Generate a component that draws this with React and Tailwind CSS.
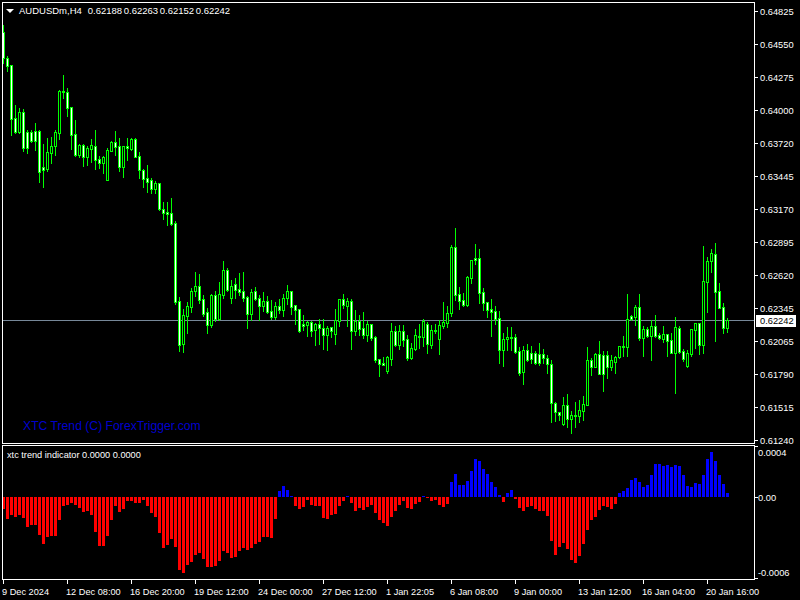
const candleGroups = [
  // [high, top, bottom, low, hollow], read at 3x, top = y offset of the crop
  { top: 0, rows: [
    [75,95,175,190,0],[168,175,197,213,0],[196,196,358,404,0],[315,355,395,398,0],[325,337,395,400,1],[327,337,443,452,0],
    [390,397,443,458,0],[390,397,423,425,0],[370,394,423,450,0],[390,394,515,545,0],[433,502,509,560,0],[415,457,507,513,1],
    [412,439,458,488,1],[390,397,437,465,1],[270,274,398,417,1],[225,274,277,295,0],[265,277,323,348,0],[320,322,404,447,0],
    [360,403,465,467,0],[432,436,465,470,1],[432,436,470,498,0],[437,444,471,495,1],[418,436,446,485,1],[390,439,479,507,0],
    [468,478,488,504,0],[467,472,488,520,1],[445,451,539,540,1],[423,427,452,453,1],[393,427,440,465,0],[415,439,500,514,0],
    [439,439,500,530,1],[415,439,445,480,0],[415,418,446,450,1],[415,418,470,472,0],[456,469,509,535,0],[507,511,536,560,0],
    [495,535,545,575,0],[533,541,566,578,0],[543,550,566,580,1],[549,550,628,629,0],[605,627,638,657,0],[605,635,641,675,0],
    [595,640,672,675,0],
  ] },
  { top: 200, rows: [
    [63,70,305,312,0],[292,304,435,453,0],[327,346,431,456,1],[307,319,347,399,1],[265,274,320,335,1],[216,259,273,288,1],
    [222,259,299,309,0],[285,298,342,348,0],[324,337,375,399,0],[282,286,375,381,1],[274,286,357,363,0],[246,283,357,360,1],
    [183,211,285,294,1],[205,211,270,273,0],[240,259,293,309,1],[234,253,270,294,0],[219,268,275,286,0],[216,274,293,303,0],
    [288,290,342,384,0],[268,277,342,361,1],[262,274,297,300,0],[286,295,317,361,0],[277,304,318,333,1],
  ] },
  { top: 220, rows: [
    [228,244,275,279,0],[240,274,290,297,0],[246,259,290,296,1],[237,259,269,278,0],[222,235,269,288,1],[195,214,235,253,1],
    [213,214,260,282,0],[255,256,269,312,0],[267,268,333,336,0],[285,312,318,330,0],[303,307,314,348,1],[303,307,332,348,0],
    [310,312,330,375,1],[297,313,325,372,0],[297,325,345,387,0],[318,325,345,390,1],[321,322,333,351,0],[267,301,342,372,1],
    [237,238,303,318,1],[222,238,255,263,0],[234,244,258,318,1],[237,244,333,387,0],[270,304,333,345,1],[285,304,326,345,0],
    [276,325,345,354,0],[303,313,345,363,1],[312,313,354,360,0],[348,352,419,426,0],[417,418,432,468,0],[411,430,434,435,0],
    [408,412,452,459,1],[309,334,416,435,1],[318,334,375,378,0],[315,334,375,387,1],[315,334,360,378,0],[345,358,414,420,0],
    [369,385,414,417,1],[327,346,388,390,1],[312,349,351,384,0],[297,304,351,378,1],[306,313,372,399,0],[315,331,375,384,1],
    [312,331,333,339,0],[300,316,357,402,1],[246,307,318,324,1],[258,280,309,321,1],[75,82,280,288,1],[24,82,224,240,0],
    [201,223,243,267,0],[219,241,255,258,0],[168,172,255,258,1],[120,121,173,189,1],[72,115,120,132,0],[87,115,218,249,0],
    [204,217,249,270,0],[246,247,270,291,0],[237,268,275,348,0],[258,274,298,312,0],[273,295,390,429,0],[339,358,390,438,1],
    [321,352,358,390,1],[321,351,353,390,0],[342,352,396,399,0],[381,394,459,465,0],[378,391,456,492,1],[372,391,420,423,0],
    [378,400,418,430,0],[393,400,429,433,0],[369,402,429,436,0],[387,403,415,430,0],[405,415,433,460,0],[420,433,550,607,0],
    [546,550,577,603,0],[576,577,584,600,0],[532,556,612,615,1],[522,556,597,621,0],[573,584,597,639,1],[546,584,587,621,0],
    [541,571,587,606,1],[529,553,573,600,1],[381,421,554,555,1],[414,421,441,465,0],[399,402,441,441,1],[363,401,461,462,0],
    [393,405,461,513,0],[393,406,441,474,0],[405,420,441,450,1],[408,412,426,459,1],[378,379,412,414,1],[348,379,382,408,0],
    [222,298,381,408,1],[285,288,298,300,0],[255,261,290,315,1],[222,262,354,360,0],[318,328,354,408,1],[321,328,347,350,0],
    [300,318,347,420,1],[285,318,348,351,0],[339,346,355,357,0],[318,343,357,366,1],[342,343,362,408,0],[339,361,399,400,0],
    [291,322,399,519,1],[318,325,396,399,0],[387,394,417,423,0],[390,400,438,441,1],[327,328,402,408,1],[309,310,329,384,1],
    [309,310,375,402,0],[78,184,375,399,1],[111,124,186,276,1],[87,99,124,156,1],[69,102,216,363,0],[189,214,264,264,0],
    [249,262,324,339,0],[294,301,324,336,1],
  ] },
]

const candles = candleGroups.flatMap((group) =>
  group.rows.map(([high, top, bottom, low, hollow]) => ({
    high: group.top + Math.round(high / 3),
    top: group.top + Math.round(top / 3),
    bottom: group.top + Math.round(bottom / 3),
    low: group.top + Math.round(low / 3),
    hollow,
  }))
)

// negative = red below zero, positive = blue above zero
const histogram = [
  -12,-22,-18,-20,-18,-21,-30,-28,-28,-38,-47,-40,-39,-39,-23,-9,-8,-6,-8,-11,
  -15,-14,-18,-35,-49,-49,-39,-23,-9,-15,-12,-4,-4,-6,-6,-3,-9,-16,-20,-36,
  -51,-48,-42,-50,-73,-76,-68,-65,-58,-56,-62,-70,-70,-69,-64,-54,-56,-61,-60,-54,
  -51,-53,-51,-47,-45,-40,-40,-41,-22,6,11,7,1,-9,-12,-10,-3,-8,-9,-9,
  -21,-22,-18,-17,-9,-4,1,-6,-14,-11,-13,-10,-8,-16,-23,-26,-29,-20,-14,-8,
  -4,-11,-12,-7,-5,1,-1,-4,-3,-8,-10,-7,15,23,12,12,16,26,38,36,
  28,23,15,10,2,-5,4,7,-2,-11,-14,-10,-9,-12,-14,-14,-19,-44,-58,-50,
  -46,-52,-63,-66,-59,-47,-33,-23,-20,-13,-9,-10,-12,-7,4,6,9,17,19,15,
  10,12,22,33,33,31,32,30,32,31,22,11,10,14,13,22,38,45,36,22,13,4,
]

const priceLabels = ['0.64825','0.64550','0.64275','0.64000','0.63720','0.63445','0.63170','0.62895','0.62620','0.62345','0.62065','0.61790','0.61515','0.61240']
const timeLabels = ['9 Dec 2024','12 Dec 08:00','16 Dec 20:00','19 Dec 12:00','24 Dec 00:00','27 Dec 12:00','1 Jan 22:05','6 Jan 08:00','9 Jan 00:00','13 Jan 12:00','16 Jan 04:00','20 Jan 16:00']
const ohlc = ['0.62188', '0.62263', '0.62152', '0.62242']

function CandleChart() {
  return (
    <svg width="751" height="440" viewBox="3 3 751 440" shapeRendering="crispEdges" className="block">
      <rect x="3" y="320" width="751" height="1" fill="#778899" />
      {candles.map((c, i) => {
        const x = 3 + i * 4
        return (
          <g key={i}>
            <rect x={x} y={c.high} width="1" height={c.low - c.high + 1} fill="#00ff00" />
            <rect x={x - 1} y={c.top} width="3" height={c.bottom - c.top + 1} fill="#00ff00" />
            {c.bottom - c.top > 1 && (
              <rect x={x} y={c.top + 1} width="1" height={c.bottom - c.top - 1} fill={c.hollow ? '#000000' : '#ffffff'} />
            )}
          </g>
        )
      })}
    </svg>
  )
}

function TrendHistogram() {
  return (
    <svg width="751" height="133" viewBox="3 446 751 133" shapeRendering="crispEdges" className="block">
      {histogram.map((v, i) => (
        <rect
          key={i}
          x={2 + i * 4}
          y={v < 0 ? 497 : 497 - v}
          width="3"
          height={Math.abs(v)}
          fill={v < 0 ? '#ff0000' : '#0000ff'}
        />
      ))}
    </svg>
  )
}

export default function App() {
  return (
    <div className="flex w-[800px] h-[600px] overflow-hidden bg-black text-white text-[9.3px] leading-[13px] font-['Liberation_Sans',Arial,sans-serif]">
      <div className="w-[755px] pl-[2px] pt-[2px] shrink-0">
        <div className="relative h-[442px] border border-white">
          <CandleChart />
          <div className="absolute left-[3px] top-[1px] flex items-center text-[9.5px]">
            <svg width="8" height="4" viewBox="0 0 8 4" className="block">
              <path d="M0 0H8L4 4Z" fill="#ffffff" />
            </svg>
            <span className="ml-[5px] mr-[6px]">AUDUSDm,H4</span>
            {ohlc.map((price) => (
              <span key={price} className="w-[36px]">{price}</span>
            ))}
          </div>
          <div className="absolute left-[20px] top-[415px] text-[12.2px] leading-[16px] text-[#0000cd]">XTC Trend (C) ForexTrigger.com</div>
        </div>
        <div className="relative h-[135px] mt-px border border-white">
          <TrendHistogram />
          <div className="absolute left-[4px] top-[3px] text-[9.2px] whitespace-pre">xtc trend indicator 0.0000 0.0000</div>
        </div>
        <div className="flex pl-px text-[9.2px]">
          {timeLabels.map((label) => (
            <div key={label} className="w-[64px] shrink-0">
              <div className="w-px h-[4px] bg-white" />
              <div className="whitespace-nowrap mt-[2px] -ml-px">{label}</div>
            </div>
          ))}
        </div>
      </div>
      <div className="relative flex-1 flex flex-col">
        <div className="flex flex-col gap-[20px] pt-[5px]">
          {priceLabels.map((label) => (
            <div key={label} className="flex items-center h-[13px]">
              <div className="w-[3px] h-px bg-white" />
              <span className="ml-[2px] pt-[2px]">{label}</span>
            </div>
          ))}
        </div>
        <div className="w-[3px] h-px mt-[-1px] bg-white" />
        <div className="h-[13px] pl-[3px]">0.0004</div>
        <div className="flex items-center h-[13px] mt-[31px]">
          <div className="w-[3px] h-px bg-white" />
          <span className="pt-[2px]">0.00</span>
        </div>
        <div className="h-[13px] mt-[61px] pl-[3px] pt-[2px]">-0.0006</div>
        <div className="w-[3px] h-px bg-white" />
        <div className="absolute left-px top-[315px] w-[40px] h-[12px] pl-[4px] bg-white text-black leading-[12px]">0.62242</div>
      </div>
    </div>
  )
}
